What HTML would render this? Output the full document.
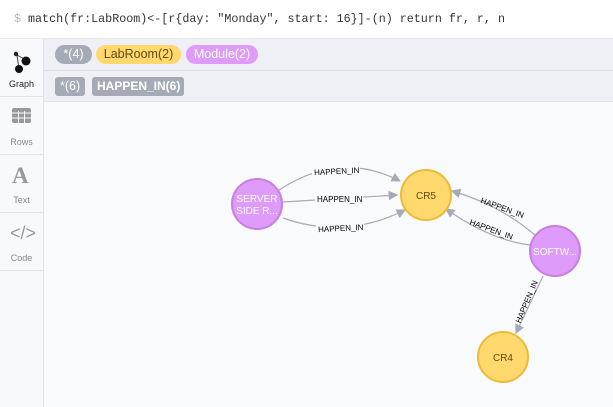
<!DOCTYPE html>
<html><head><style>
body{margin:0;width:613px;height:407px;overflow:hidden;font-family:"Liberation Sans",sans-serif;background:#fff;position:relative}
.top{position:absolute;left:0;top:0;width:613px;height:38px;background:#fff;border-bottom:1px solid #e6e9ee}
.top span{position:absolute;left:14px;top:12px;font:11.7px "Liberation Mono",monospace;color:#333}
.side{position:absolute;left:0;top:39px;width:43px;height:368px;background:#f8f9fb;border-right:1px solid #e0e3e8}
.tab{height:57px;border-bottom:1px solid #dfe2e6;text-align:center;font-size:9px;color:#888;position:relative}
.tab div{position:absolute;bottom:7px;width:100%}
.bar{position:absolute;left:44px;width:569px;background:#eef0f5;border-bottom:1px solid #dde0e6}
.pill{position:absolute;height:19px;line-height:19px;font-size:12.5px;padding:0 6px;color:#fff}
.canvas{position:absolute;left:44px;top:102px;width:569px;height:305px;background:#f9fafc}
</style></head><body>
<div class="top"><span><b style="color:#bbb;font-weight:normal">$</b> match(fr:LabRoom)&lt;-[r{day: "Monday", start: 16}]-(n) return fr, r, n</span></div>
<div class="side">
 <div class="tab" style="background:#f8f9fb;color:#222"><svg width="22" height="26" style="position:absolute;left:11px;top:11px"><line x1="6" y1="5" x2="15" y2="10" stroke="#444"/><line x1="6" y1="5" x2="8" y2="19" stroke="#444"/><circle cx="5" cy="4" r="2.2" fill="#222"/><circle cx="15" cy="11" r="4.5" fill="#111"/><circle cx="8" cy="19" r="4" fill="#111"/></svg><div style="color:#222">Graph</div></div>
 <div class="tab"><svg width="20" height="16" style="position:absolute;left:12px;top:11px"><rect x="0" y="0" width="19" height="15" rx="2" fill="#999"/><g stroke="#f8f9fb" stroke-width="1"><line x1="0" y1="5" x2="19" y2="5"/><line x1="0" y1="10" x2="19" y2="10"/><line x1="6.5" y1="3" x2="6.5" y2="15"/><line x1="12.5" y1="3" x2="12.5" y2="15"/></g></svg><div>Rows</div></div>
 <div class="tab"><span style="position:absolute;left:12px;top:8px;font:bold 23px 'Liberation Serif',serif;color:#999">A</span><div>Text</div></div>
 <div class="tab"><span style="position:absolute;left:10px;top:10px;font-size:18px;color:#999">&lt;/&gt;</span><div>Code</div></div>
</div>
<div class="bar" style="top:39px;height:31px">
 <span class="pill" style="left:11px;top:6px;width:25px;text-align:center;background:#a5abb6;border-radius:10px">*(4)</span>
 <span class="pill" style="left:52px;top:6px;width:73px;text-align:center;background:#ffd86e;color:#604a0e;border-radius:10px">LabRoom(2)</span>
 <span class="pill" style="left:142px;top:6px;width:60px;text-align:center;background:#de9bf9;border-radius:10px">Module(2)</span>
</div>
<div class="bar" style="top:71px;height:30px">
 <span class="pill" style="left:11px;top:6px;background:#a5abb6;border-radius:3px;padding:0 5px">*(6)</span>
 <span class="pill" style="left:48px;top:6px;width:82px;text-align:center;background:#a5abb6;border-radius:3px;padding:0 5px;font-weight:bold;font-size:12px">HAPPEN_IN(6)</span>
</div>
<div class="canvas"></div>
<svg width="613" height="407" style="position:absolute;left:0;top:0">
<defs><marker id="a" markerWidth="8" markerHeight="8" refX="7" refY="4" orient="auto"><path d="M0,0 L8,4 L0,8z" fill="#a5abb6"/></marker></defs>
<g fill="none" stroke="#a5abb6" stroke-width="1.2">
<path d="M279,190 Q340,150 400,181" marker-end="url(#a)"/>
<path d="M283,202 L397,195" marker-end="url(#a)"/>
<path d="M283,218 Q345,240 405,210" marker-end="url(#a)"/>
<path d="M535,235 Q500,205 452,191" marker-end="url(#a)"/>
<path d="M530,245 Q490,240 446,209" marker-end="url(#a)"/>
<path d="M543,276 L516,333" marker-end="url(#a)"/>
</g>
<g font-size="8" fill="#000" font-family="Liberation Sans">
<rect x="312" y="166" width="48" height="10" fill="#f9fafc"/><text x="314" y="174" transform="rotate(-3 336 170)">HAPPEN_IN</text>
<rect x="315" y="194" width="48" height="10" fill="#f9fafc"/><text x="317" y="202">HAPPEN_IN</text>
<rect x="316" y="223" width="48" height="10" fill="#f9fafc"/><text x="318" y="231" transform="rotate(-3 340 227)">HAPPEN_IN</text>
<text x="478" y="210" transform="rotate(20 500 212)">HAPPEN_IN</text>
<text x="467" y="232" transform="rotate(20 490 234)">HAPPEN_IN</text>
<text x="506" y="308" transform="rotate(-67 525 305)">HAPPEN_IN</text>
</g>
<circle cx="257" cy="204" r="25" fill="#de9bf9" stroke="#c77fe0" stroke-width="2"/>
<text x="257" y="202" font-size="10" fill="#fff" text-anchor="middle">SERVER</text>
<text x="257" y="214" font-size="10" fill="#fff" text-anchor="middle">SIDE R...</text>
<circle cx="426" cy="195" r="25" fill="#ffd86e" stroke="#edba39" stroke-width="2"/>
<text x="426" y="199" font-size="10" fill="#604a0e" text-anchor="middle">CR5</text>
<circle cx="555" cy="251" r="25" fill="#de9bf9" stroke="#c77fe0" stroke-width="2"/>
<text x="555" y="255" font-size="10" fill="#fff" text-anchor="middle">SOFTW...</text>
<circle cx="503" cy="357" r="25" fill="#ffd86e" stroke="#edba39" stroke-width="2"/>
<text x="503" y="361" font-size="10" fill="#604a0e" text-anchor="middle">CR4</text>
</svg>
</body></html>
